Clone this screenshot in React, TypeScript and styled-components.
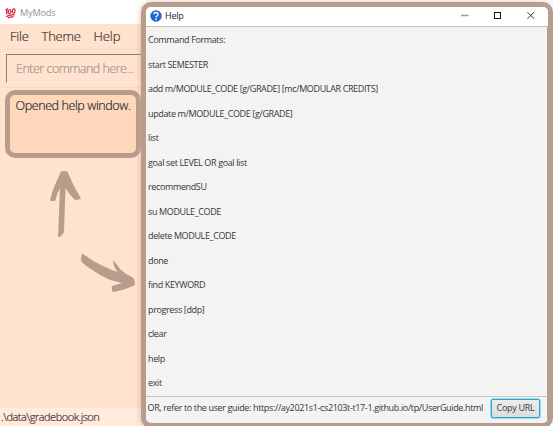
import React from 'react';
import styled, { createGlobalStyle } from 'styled-components';

const GlobalStyle = createGlobalStyle`
  * { box-sizing: border-box; }
  body { margin: 0; overflow: hidden; }
`;

const Desktop = styled.div`
  position: relative;
  width: 553px;
  height: 426px;
  overflow: hidden;
  background: #f7f7f7;
  font-family: 'Open Sans', 'Noto Sans', sans-serif;
`;

const MainWindow = styled.main`
  display: flex;
  flex-direction: column;
  width: 146px;
  height: 426px;
  background: #ffe3cf;
  white-space: nowrap;
`;

const MainTitle = styled.header`
  display: flex;
  align-items: center;
  gap: 4px;
  height: 24px;
  padding: 2px 0 0 5px;
  background: #fff;
  color: #929292;
`;

const Label = styled.span<{ $size: number; $spacing?: number; $weight?: number }>`
  font-size: ${p => p.$size}px;
  letter-spacing: ${p => p.$spacing ?? 0}px;
  font-weight: ${p => p.$weight ?? 400};
  -webkit-text-stroke: ${p => (p.$weight === 300 ? '0.2px' : '0')};
  line-height: 1.36;
  white-space: nowrap;
`;

const MenuBar = styled.nav`
  display: flex;
  align-items: center;
  gap: 13px;
  height: 25px;
  padding-left: 10px;
  color: #3c3530;
`;

const CommandArea = styled.section`
  height: 39px;
  padding: 4px 0 4px 6px;
  border-top: 1px solid #f9dcc8;
  border-bottom: 1px solid #ffd9bd;
`;

const CommandInput = styled.div`
  display: flex;
  align-items: center;
  height: 29px;
  padding-left: 9px;
  border: 1px solid #8d7d72;
  border-bottom-color: #fff0e5;
  color: #a0958d;
`;

const ResultBox = styled.section`
  width: 136px;
  height: 68px;
  margin: 2px 0 0 5px;
  padding: 0 0 0 5.5px;
  border: 5px solid #b89d8d;
  border-radius: 10px;
  background: #ffd8bb;
  color: #292b32;
  line-height: 18px;
`;

const Spacer = styled.div`
  flex: 1;
`;

const StatusBar = styled.footer`
  display: flex;
  align-items: center;
  height: 19px;
  padding: 1px 0 0 1px;
  background: #ffeadc;
  border-top: 1px solid #f7decf;
  color: #40352f;
`;

const Arrows = styled.svg`
  position: absolute;
  left: 30px;
  top: 160px;
`;

const HelpWindow = styled.aside`
  position: absolute;
  left: 141px;
  top: 2px;
  width: 412px;
  height: 426px;
  display: flex;
  flex-direction: column;
  overflow: hidden;
  border: 5px solid #b89d8d;
  border-radius: 10px;
  background: #f3f3f3;
  color: #34373b;
  box-shadow: -2px 0 4px #d69f8c66;
`;

const HelpTitle = styled.header`
  display: flex;
  align-items: center;
  height: 21px;
  padding: 0 13px 1px 4px;
  border-bottom: 1px solid #c4c4c4;
  background: #fff;
  color: #242424;
`;

const HelpCaption = styled.div`
  flex: 1;
  display: flex;
  align-items: center;
  gap: 3px;
`;

const Commands = styled.ul`
  flex: 1;
  margin: 0;
  padding: 1.6px 0 0 2px;
  list-style: none;
  border-right: 1px solid #a5a5a5;
`;

const Command = styled.li`
  display: flex;
  align-items: center;
  height: 24.5px;
`;

const HelpFooter = styled.footer`
  display: flex;
  align-items: center;
  justify-content: space-between;
  height: 29px;
  padding: 0 7px 3px 1.5px;
  border-top: 1px solid #c4c4c4;
  border-right: 1px solid #a5a5a5;
`;

const CopyButton = styled.button`
  display: flex;
  align-items: center;
  justify-content: center;
  flex: none;
  width: 49px;
  height: 19px;
  padding: 0;
  border: 1px solid #26a9cf;
  border-radius: 2px;
  background: linear-gradient(#ededed, #dcdcdc);
  box-shadow: 0 0 0 0.5px #53bad7;
  color: #34373b;
  font-family: inherit;
`;

const commands: string[] = [
  'Command Formats:',
  'start SEMESTER',
  'add m/MODULE_CODE [g/GRADE] [mc/MODULAR CREDITS]',
  'update m/MODULE_CODE [g/GRADE]',
  'list',
  'goal set LEVEL OR goal list',
  'recommendSU',
  'su MODULE_CODE',
  'delete MODULE_CODE',
  'done',
  'find KEYWORD',
  'progress [ddp]',
  'clear',
  'help',
  'exit',
];

const HundredIcon = () => (
  <svg width="11" height="11" viewBox="0 0 11 11" fill="none" stroke="#d9253e">
    <path d="M.6 2.1 2 1.1 1.7 6.3" strokeWidth="1.4" />
    <ellipse cx="4.6" cy="3.7" rx="1.3" ry="2.2" transform="rotate(12 4.6 3.7)" strokeWidth="1.2" />
    <ellipse cx="8.7" cy="3" rx="1.3" ry="2.2" transform="rotate(12 8.7 3)" strokeWidth="1.2" />
    <path d="M1 8.6Q5 6.8 9.8 6.7M2.8 10Q5.3 8.8 8.5 8.6" strokeWidth="1.2" />
  </svg>
);

const HelpIcon = () => (
  <svg width="12" height="12" viewBox="0 0 12 12">
    <circle cx="6" cy="6" r="5.7" fill="#1769ce" />
    <path d="M4 4.3C4.1 1.9 8.2 2 8.1 4.3 8 5.8 6.1 5.8 6.1 7.5" fill="none" stroke="#fff" strokeWidth="1.4" />
    <circle cx="6.1" cy="9.3" r=".85" fill="#fff" />
  </svg>
);

const WindowControls = () => (
  <svg width="74" height="9" viewBox="0 0 74 9" fill="none">
    <path d="M0 4.5H7.5" stroke="#999" strokeWidth="1.6" />
    <rect x="33.5" y="1.5" width="6" height="6" stroke="#171717" />
    <path d="M66.5 1.2 73 7.7M73 1.2 66.5 7.7" stroke="#333" />
  </svg>
);

export default function App() {
  return (
    <Desktop>
      <GlobalStyle />
      <MainWindow>
        <MainTitle><HundredIcon /><Label $size={9.2} $spacing={-0.2}>MyMods</Label></MainTitle>
        <MenuBar>
          <Label $size={13} $weight={300} $spacing={-0.25}>File</Label>
          <Label $size={13} $weight={300} $spacing={-0.25}>Theme</Label>
          <Label $size={13} $weight={300} $spacing={-0.1}>Help</Label>
        </MenuBar>
        <CommandArea>
          <CommandInput><Label $size={12.5} $weight={300} $spacing={-0.5}>Enter command here...</Label></CommandInput>
        </CommandArea>
        <ResultBox><Label $size={12.5} $weight={300} $spacing={-0.4}>Opened help window.</Label></ResultBox>
        <Spacer />
        <StatusBar><Label $size={11} $weight={300} $spacing={-0.48}>.\data\gradebook.json</Label></StatusBar>
      </MainWindow>
      <Arrows width="110" height="140" viewBox="0 0 110 140" fill="#b89d8d">
        <path d="M31 11.5Q34 10.5 37.5 11.5Q40 18 43.5 25Q47 32 51 38.5Q48 40.5 44.5 39.5Q39 34 35.5 28L34 72Q31.5 77 28 77L30 28Q26.5 34 25.5 40.5Q23 41.5 20 40.5Q21.5 33 25 25Q28 18 31 11.5Z" />
        <path d="M52.5 93.5Q62 101 73 106Q81 110 88 112Q83 107 83 100Q86 103 90 109Q95 114 102 117Q105 119 105 125Q95 130 83 132Q81 129 82 126L92 123Q76 120 64 111Q54 105 51 101Q51 95 52.5 93.5Z" />
      </Arrows>
      <HelpWindow>
        <HelpTitle>
          <HelpCaption><HelpIcon /><Label $size={9} $spacing={-0.2}>Help</Label></HelpCaption>
          <WindowControls />
        </HelpTitle>
        <Commands>
          {commands.map(text => (
            <Command key={text}><Label $size={9} $spacing={-0.37}>{text}</Label></Command>
          ))}
        </Commands>
        <HelpFooter>
          <Label $size={9} $spacing={-0.36}>OR, refer to the user guide: https://ay2021s1-cs2103t-t17-1.github.io/tp/UserGuide.html</Label>
          <CopyButton><Label $size={9} $spacing={-0.3}>Copy URL</Label></CopyButton>
        </HelpFooter>
      </HelpWindow>
    </Desktop>
  );
}
